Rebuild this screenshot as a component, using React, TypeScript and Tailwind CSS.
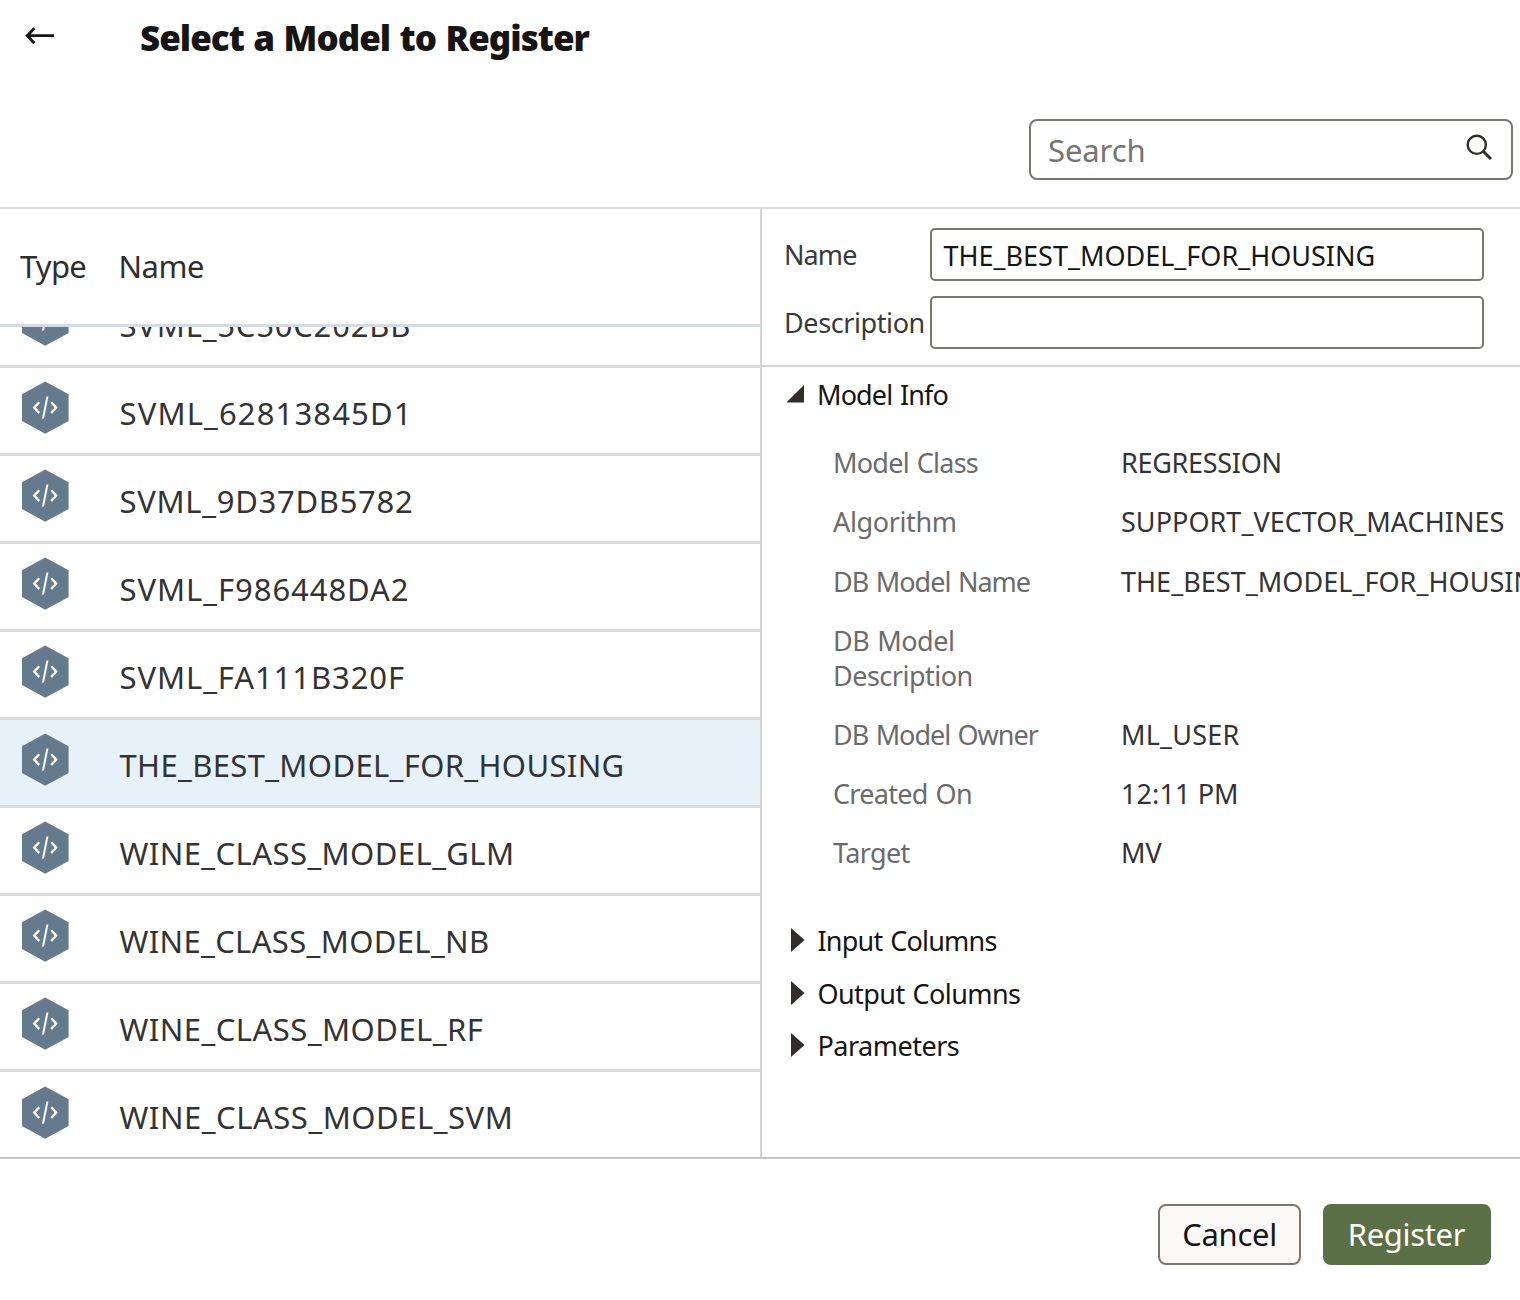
import React from "react";

type Model = { name: string; tracking: string; selected?: boolean };

const models: Model[] = [
  { name: "SVML_5C50C202BB", tracking: "tracking-[0.8px]" },
  { name: "SVML_62813845D1", tracking: "tracking-[1.14px]" },
  { name: "SVML_9D37DB5782", tracking: "tracking-[0.71px]" },
  { name: "SVML_F986448DA2", tracking: "tracking-[0.95px]" },
  { name: "SVML_FA111B320F", tracking: "tracking-[0.92px]" },
  { name: "THE_BEST_MODEL_FOR_HOUSING", tracking: "tracking-[0.36px]", selected: true },
  { name: "WINE_CLASS_MODEL_GLM", tracking: "tracking-[0.43px]" },
  { name: "WINE_CLASS_MODEL_NB", tracking: "tracking-[0.35px]" },
  { name: "WINE_CLASS_MODEL_RF", tracking: "tracking-[0.47px]" },
  { name: "WINE_CLASS_MODEL_SVM", tracking: "tracking-[0.53px]" },
];

type Detail = { label: string; labelTracking: string; value: string; valueTracking: string; gap: string };

const details: Detail[] = [
  { label: "Model Class", labelTracking: "tracking-[-0.74px]", value: "REGRESSION", valueTracking: "tracking-[-0.3px]", gap: "mb-6" },
  { label: "Algorithm", labelTracking: "tracking-[-0.36px]", value: "SUPPORT_VECTOR_MACHINES", valueTracking: "tracking-[0.04px]", gap: "mb-[25px]" },
  { label: "DB Model Name", labelTracking: "tracking-[-1px]", value: "THE_BEST_MODEL_FOR_HOUSING", valueTracking: "tracking-[0.04px]", gap: "mb-6" },
  { label: "DB Model Description", labelTracking: "tracking-[-0.5px]", value: "", valueTracking: "tracking-normal", gap: "mb-6" },
  { label: "DB Model Owner", labelTracking: "tracking-[-1.04px]", value: "ML_USER", valueTracking: "tracking-[0.2px]", gap: "mb-6" },
  { label: "Created On", labelTracking: "tracking-[-0.7px]", value: "12:11 PM", valueTracking: "tracking-[0.1px]", gap: "mb-6" },
  { label: "Target", labelTracking: "tracking-[-0.65px]", value: "MV", valueTracking: "tracking-normal", gap: "" },
];

const sections = [
  { label: "Input Columns", tracking: "tracking-[-0.79px]", height: "h-[53px]" },
  { label: "Output Columns", tracking: "tracking-[-0.58px]", height: "h-[53px]" },
  { label: "Parameters", tracking: "tracking-[-0.5px]", height: "h-[51px]" },
];

function BackArrow() {
  return (
    <svg width="30" height="18" viewBox="0 0 30 18" fill="none" stroke="#161513" strokeWidth="2.8">
      <path d="M29 8.7H2.6M9.4 1.2 2.2 8.7l7.2 7.5" />
    </svg>
  );
}

function SearchIcon() {
  return (
    <svg width="28" height="28" viewBox="0 0 28 28" fill="none" stroke="#312d2a" strokeWidth="2.4">
      <circle cx="10.8" cy="10.8" r="9.1" />
      <path d="M17.2 17.2 25 25" strokeWidth="2.9" />
    </svg>
  );
}

function ModelIcon() {
  return (
    <svg width="47" height="53" viewBox="0 0 47 53" fill="none">
      <path d="M23.2 0.4 46.6 13.2V40L23.2 52.8 0 40V13.2Z" fill="#667a8e" />
      <path d="M17.2 21.2 12.2 26.6l5 5.4M29.2 21.2l5 5.4-5 5.4" stroke="#fff" strokeWidth="2.3" />
      <path d="M25.4 15.6 21 37.6" stroke="#fff" strokeWidth="2" />
    </svg>
  );
}

function Field({ label, tracking, value }: { label: string; tracking: string; value: string }) {
  return (
    <div className="flex h-[53px] items-center">
      <label className={`w-[146px] shrink-0 whitespace-nowrap text-[#3a3a3a] ${tracking}`}>{label}</label>
      <div className="flex h-full w-[554px] shrink-0 items-center rounded-[5px] border-2 border-[#7b7672] pt-0.5 pl-[11.5px] text-[#161513]">
        {value}
      </div>
    </div>
  );
}

export default function App() {
  return (
    <div
      className="flex h-[1300px] w-[1520px] flex-col overflow-hidden bg-white text-[31px] leading-[40px] text-[#312d2a]"
      style={{ fontFamily: '"Noto Sans", sans-serif' }}
    >
      <header className="flex h-[209px] shrink-0 flex-col border-b-2 border-[#dcdcd8]">
        <div className="flex h-[75px] items-center">
          <button className="mb-1 ml-[25px] w-[115px]">
            <BackArrow />
          </button>
          <h1 className="text-[35px] font-black tracking-[-1px] text-[#161513] [word-spacing:1.4px]">
            Select a Model to Register
          </h1>
        </div>
        <div className="mt-11 ml-auto mr-[7px] flex h-[61px] w-[484px] items-center justify-between rounded-lg border-2 border-[#7b7672] pr-[17px] pl-[17px]">
          <span className="tracking-[-0.09px] text-[#757575]">Search</span>
          <span className="mb-1">
            <SearchIcon />
          </span>
        </div>
      </header>

      <main className="flex h-[948px] shrink-0">
        <section className="flex w-[762px] shrink-0 flex-col border-r-2 border-[#d4d4d4]">
          <div className="flex h-[118px] shrink-0 items-center border-b-3 border-[#d3dce3] pb-0.5">
            <span className="ml-5 w-[98.5px] tracking-[-0.76px]">Type</span>
            <span className="tracking-[-0.5px]">Name</span>
          </div>
          <div className="min-h-0 flex-1 overflow-hidden">
            <ul className="-mt-[47px]">
              {models.map((m) => (
                <li
                  key={m.name}
                  className={`group flex h-[88px] items-center border-b-3 border-[#dbdbdb] ${m.selected ? "bg-[#e6f1f9]" : ""}`}
                >
                  <span className="mb-[7px] ml-[22px] w-[97.5px] shrink-0 group-last:mb-[5px]">
                    <ModelIcon />
                  </span>
                  <span className={`mt-[5px] text-[#333333] ${m.tracking}`}>{m.name}</span>
                </li>
              ))}
            </ul>
          </div>
        </section>

        <section className="min-w-0 flex-1 overflow-hidden text-[27px] leading-[35px]">
          <div className="flex h-[158px] flex-col gap-[15px] border-b-2 border-[#d4d4d4] pt-[19px] pl-[22px]">
            <Field label="Name" tracking="tracking-[-0.9px]" value="THE_BEST_MODEL_FOR_HOUSING" />
            <Field label="Description" tracking="tracking-[-0.4px]" value="" />
          </div>

          <div className="flex h-[54px] items-center pl-[24px] text-[#161513]">
            <svg className="w-[31px] shrink-0" width="31" height="18" viewBox="0 0 31 18">
              <path d="M18 0V17.5H0.3Z" fill="#312d2a" />
            </svg>
            <span className="mt-px tracking-[-0.86px] [word-spacing:1.5px]">Model Info</span>
          </div>

          <dl className="mt-6 pl-[71px]">
            {details.map((d) => (
              <div key={d.label} className={`flex ${d.gap}`}>
                <dt className={`w-[220px] shrink-0 text-[#6b6b6b] [word-spacing:1.5px] ${d.labelTracking}`}>{d.label}</dt>
                <dd className={`ml-[68px] whitespace-nowrap text-[#333333] ${d.valueTracking}`}>{d.value}</dd>
              </div>
            ))}
          </dl>

          <div className="mt-[43px] text-[#161513]">
            {sections.map((s) => (
              <div key={s.label} className={`flex items-center pl-[29px] ${s.height}`}>
                <svg className="w-[26.5px] shrink-0" width="26.5" height="24" viewBox="0 0 26.5 24">
                  <path d="M0 0 13.5 12 0 24Z" fill="#312d2a" />
                </svg>
                <span className={`mt-0.5 [word-spacing:1.5px] ${s.tracking}`}>{s.label}</span>
              </div>
            ))}
          </div>
        </section>
      </main>

      <footer className="flex flex-1 justify-end gap-[22px] border-t-2 border-[#c9c5c2] pt-[45px] pr-[29px]">
        <button className="flex h-[61px] w-[143px] items-center justify-center rounded-lg border-2 border-[#7b7672] bg-[#fbf9f8] pb-0.5 tracking-[-0.3px] text-[#161513]">
          Cancel
        </button>
        <button className="flex h-[61px] w-[168px] items-center justify-center rounded-lg bg-[#5b7047] pr-px pb-0.5 tracking-[-0.33px] text-white">
          Register
        </button>
      </footer>
    </div>
  );
}
